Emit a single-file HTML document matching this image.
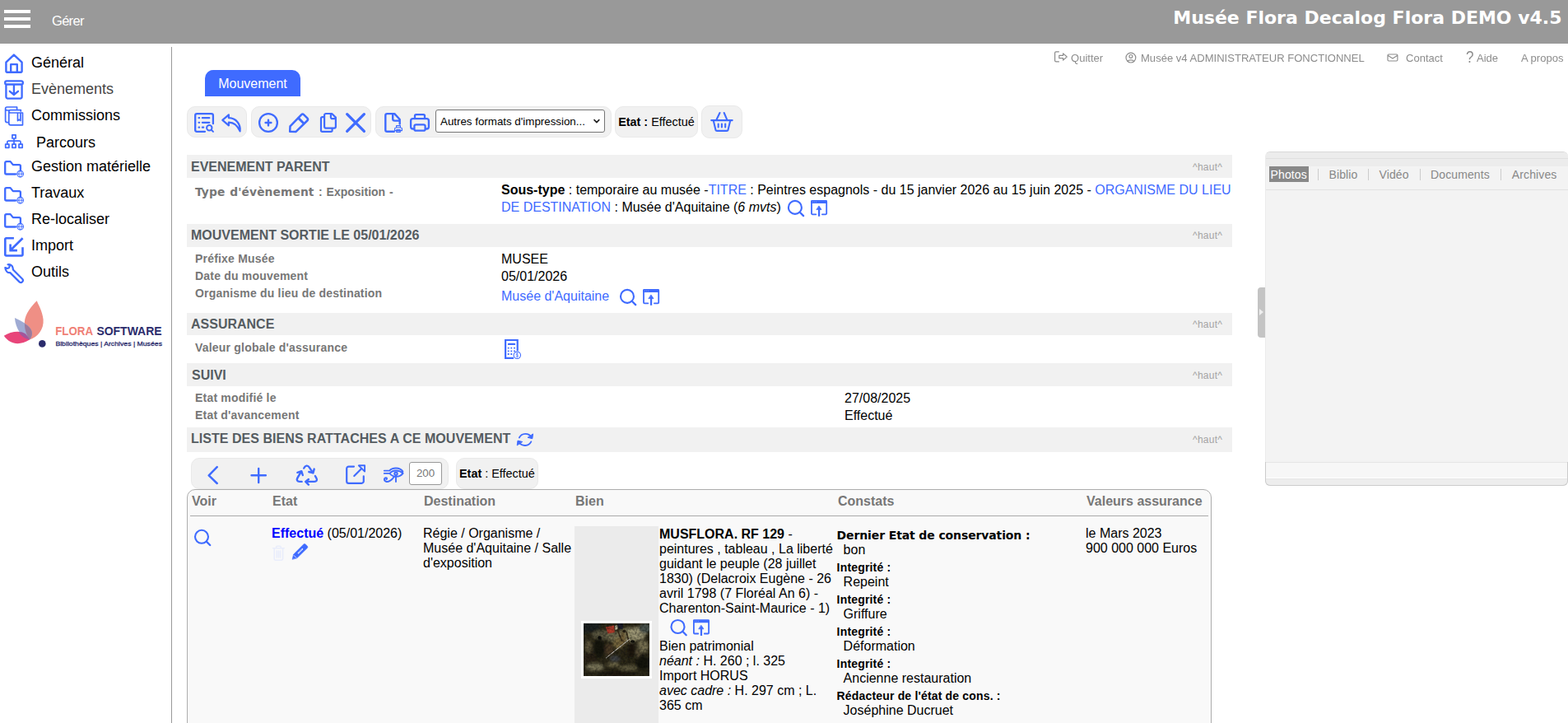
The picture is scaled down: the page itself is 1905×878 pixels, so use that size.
<!DOCTYPE html>
<html lang="fr">
<head>
<meta charset="utf-8">
<title>Musée Flora - Mouvement</title>
<style>
*{box-sizing:border-box;}
html,body{margin:0;padding:0;}
body{width:1905px;height:878px;overflow:hidden;background:#fff;font-family:"Liberation Sans",sans-serif;font-size:16px;color:#000;position:relative;}
.a{position:absolute;white-space:nowrap;}
#top{position:absolute;left:0;top:0;width:1905px;height:53px;background:#999;}
#burger{position:absolute;left:5px;top:12px;width:32px;height:22px;}
#burger i{position:absolute;left:0;width:32px;height:4px;background:#fff;}
#gerer{position:absolute;left:63px;top:15px;color:#fff;font-size:16.5px;line-height:20px;letter-spacing:-0.7px;}
#title{position:absolute;right:7.5px;top:7px;color:#fff;font-family:"DejaVu Sans","Liberation Sans",sans-serif;font-weight:bold;font-size:22px;line-height:30px;white-space:nowrap;}
#side{position:absolute;left:0;top:57px;width:209px;height:821px;border-right:1px solid #999;}
.mi{position:absolute;left:38px;font-size:18px;line-height:22px;white-space:nowrap;color:#000;}

.tl{position:absolute;top:61px;font-size:13.5px;line-height:20px;color:#8c8c8c;white-space:nowrap;transform:scaleX(0.967);transform-origin:0 0;}
#tab{position:absolute;left:249px;top:85px;width:116px;height:32px;background:#3f6bff;border-radius:10px 10px 0 0;color:#fff;font-size:16px;line-height:34px;text-align:center;}
.grp{position:absolute;top:129px;height:38px;background:#f1f1f1;border:1px solid #e9e9e9;border-radius:10px;}
.sh{position:absolute;left:227px;width:1270px;height:28px;background:#f1f1f1;color:#555c61;font-weight:bold;font-size:16px;line-height:28px;padding-left:5px;white-space:nowrap;}
.haut{position:absolute;left:1449px;font-size:12px;line-height:14px;color:#a4a4a4;white-space:nowrap;letter-spacing:0.25px;}
.lb{position:absolute;left:237px;font-weight:bold;font-size:14px;line-height:18px;color:#777;letter-spacing:0.2px;white-space:nowrap;}
.vl{position:absolute;left:609px;font-size:16px;line-height:20px;color:#000;white-space:nowrap;}
.bl{color:#3f6bff;}
.blk{font-family:"DejaVu Sans","Liberation Sans",sans-serif;font-weight:bold;font-size:13.8px;letter-spacing:0;}

#tbl{position:absolute;left:227px;top:594px;width:1245px;height:300px;border:1px solid #adadad;border-radius:10px;background:#f9f9f9;}
.th{position:absolute;top:599px;font-weight:bold;font-size:16px;line-height:20px;color:#777;white-space:nowrap;}
.td{position:absolute;font-size:16px;line-height:18px;color:#000;}
.cl{font-weight:bold;font-size:14px;line-height:18px;display:block;margin-left:-8px;letter-spacing:0.17px;}
.cv{display:block;height:21px;}
#pnl{position:absolute;left:1537px;top:184px;width:368px;height:406px;border-top:1px solid #d8d8d8;border-left:1px solid #ececec;border-radius:6px;background:#f3f3f3;overflow:hidden;}
.pt{position:absolute;top:203px;font-size:14px;line-height:19px;color:#888;white-space:nowrap;letter-spacing:0.12px;}
.ps{position:absolute;top:205px;width:1px;height:14px;background:#ccc;}
</style>
</head>
<body>
<div id="top">
  <div id="burger"><i style="top:0"></i><i style="top:9px"></i><i style="top:18px"></i></div>
  <div id="gerer">Gérer</div>
  <div id="title">Musée Flora Decalog Flora DEMO v4.5</div>
</div>
<div id="side"></div>
<!--MENU-->
<div class="mi" style="top:65px">Général</div>
<div class="mi" style="top:97px;color:#444">Evènements</div>
<div class="mi" style="top:129px">Commissions</div>
<div class="mi" style="top:162px;left:44px">Parcours</div>
<div class="mi" style="top:191px">Gestion matérielle</div>
<div class="mi" style="top:223px">Travaux</div>
<div class="mi" style="top:255px">Re-localiser</div>
<div class="mi" style="top:287px">Import</div>
<div class="mi" style="top:319px">Outils</div>
<!--LOGO-->
<svg class="a" style="left:0;top:360px" width="209" height="70" viewBox="0 360 209 70">
<path d="M35.9 412.6 C46 409 53.5 400 52.6 388 C51.5 378 46.5 370 44.8 365.3 C38 372 30.5 381 29.8 391.5 C29.5 400 32 407 35.9 412.6 Z" fill="#ef8f85"/>
<path d="M35.9 412.6 C24 420 12 418.5 4.8 407.8 C12 403 24 401 30 405 C33 407.5 35 410 35.9 412.6 Z" fill="#e8457a"/>
<path d="M35.9 412.6 C25.5 409 19 399 17.9 386.1 C26 390 35.5 394 38.5 402 C39.5 406 38.5 410 35.9 412.6 Z" fill="#8e9ccb" fill-opacity="0.85"/>
<path d="M35.9 412.6 C32.5 407 30 400 29.9 393.2 C34 395.5 37.5 398.5 38.6 402.6 C39.4 406 38.4 410 35.9 412.6 Z" fill="#9b7a9c"/>
<path d="M35.9 412.6 C31 411.5 26 408.5 22.5 403.3 C25.5 403 28.5 403.6 30.6 405.3 C33 407.4 35 410 35.9 412.6 Z" fill="#a3569a"/>
<circle cx="51.3" cy="417.4" r="4.3" fill="#2b2c6c"/>
<text x="67.2" y="406.6" font-family="'Liberation Sans',sans-serif" font-weight="bold" font-size="14px" fill="#ef7f76" textLength="45.8" lengthAdjust="spacingAndGlyphs">FLORA</text>
<text x="117.4" y="406.6" font-family="'Liberation Sans',sans-serif" font-weight="bold" font-size="14px" fill="#2b2c6c" textLength="79.2" lengthAdjust="spacingAndGlyphs">SOFTWARE</text>
<text x="67.4" y="420.4" font-family="'Liberation Sans',sans-serif" font-weight="normal" stroke="#2b2c6c" stroke-width="0.28" font-size="7.8px" fill="#2b2c6c" textLength="129.6" lengthAdjust="spacingAndGlyphs">Bibliothèques | Archives | Musées</text>
</svg>
<!--TOPLINKS-->
<div class="tl" style="left:1301.3px">Quitter</div>
<div class="tl" style="left:1385.9px">Musée v4 ADMINISTRATEUR FONCTIONNEL</div>
<div class="tl" style="left:1708.4px">Contact</div>
<div class="tl" style="left:1780.6px;top:59px;font-size:20px;transform:scaleX(0.85)">?</div>
<div class="tl" style="left:1794.4px">Aide</div>
<div class="tl" style="left:1848px">A propos</div>
<!--TAB-->
<div id="tab">Mouvement</div>
<!--TOOLBAR-->
<div class="grp" style="left:227px;width:73px"></div>
<div class="grp" style="left:305px;width:146px"></div>
<div class="grp" style="left:456px;width:287px"></div>
<div class="grp" style="left:747px;width:101px"></div>
<div class="grp" style="left:852px;width:50px;top:128px;height:40px"></div>
<div class="a" style="left:529px;top:133px;width:206px;height:28px;border:1px solid #767676;border-radius:3px;background:#fff;font-size:13.33px;line-height:28px;padding-left:5px;">Autres formats d'impression...</div>
<div class="a" style="left:751.2px;top:138px;font-size:14.4px;line-height:20px;"><b>Etat :</b> Effectué</div>
<!--SECTIONS-->
<div class="sh" style="top:188px;line-height:30px">EVENEMENT PARENT</div>
<div class="sh" style="top:272px">MOUVEMENT SORTIE LE 05/01/2026</div>
<div class="sh" style="top:380px;height:27px;line-height:27px">ASSURANCE</div>
<div class="sh" style="top:441px;padding-left:6px;line-height:30px">SUIVI</div>
<div class="sh" style="top:519px;height:30px;line-height:28px;letter-spacing:0.04px">LISTE DES BIENS RATTACHES A CE MOUVEMENT</div>
<div class="haut" style="top:196px">^haut^</div>
<div class="haut" style="top:279px">^haut^</div>
<div class="haut" style="top:387px">^haut^</div>
<div class="haut" style="top:449px">^haut^</div>
<div class="haut" style="top:527px">^haut^</div>
<div class="lb" style="top:224px;letter-spacing:0;word-spacing:1px"><span class="blk" style="letter-spacing:0.1px;margin-right:0.6px">Type d'évènement</span> : Exposition -</div>
<div class="vl" style="top:220px;line-height:21px;white-space:normal;width:895px"><b>Sous-type</b> : temporaire au musée -<span class="bl">TITRE</span> : Peintres espagnols - du 15 janvier 2026 au 15 juin 2025 - <span class="bl">ORGANISME DU LIEU DE DESTINATION</span> : Musée d'Aquitaine (<i>6 mvts</i>)</div>
<div class="lb" style="top:305px">Préfixe Musée</div>
<div class="lb" style="top:326px">Date du mouvement</div>
<div class="lb" style="top:347px">Organisme du lieu de destination</div>
<div class="vl" style="top:305px">MUSEE</div>
<div class="vl" style="top:326px">05/01/2026</div>
<div class="vl bl" style="top:350px">Musée d'Aquitaine</div>
<div class="lb" style="top:413px">Valeur globale d'assurance</div>
<div class="lb" style="top:474px">Etat modifié le</div>
<div class="lb" style="top:495px">Etat d'avancement</div>
<div class="vl" style="top:474px;left:1026px">27/08/2025</div>
<div class="vl" style="top:495px;left:1026px">Effectué</div>
<!--LIST-->
<div class="grp" style="left:232px;top:556px;width:313px;height:38px"></div>
<div class="grp" style="left:554px;top:556px;width:100px;height:38px"></div>
<div class="a" style="left:497px;top:561px;width:40px;height:28px;border:1px solid #999;border-radius:3px;background:#fff;font-size:13.33px;line-height:26px;color:#777;text-align:center;">200</div>
<div class="a" style="left:558px;top:565px;font-size:14.4px;line-height:20px;"><b>Etat</b> : Effectué</div>
<div id="tbl"></div>
<div class="a" style="left:231px;top:626px;width:1237px;height:1px;background:#aaa"></div>
<div class="th" style="left:233px">Voir</div>
<div class="th" style="left:331px">Etat</div>
<div class="th" style="left:515px">Destination</div>
<div class="th" style="left:699px">Bien</div>
<div class="th" style="left:1018px">Constats</div>
<div class="th" style="left:1320px">Valeurs assurance</div>
<div class="td" style="left:330px;top:639px;white-space:nowrap"><b style="color:#00f">Effectué</b> (05/01/2026)</div>
<div class="td" style="left:514px;top:639px;width:184px">Régie / Organisme / Musée d'Aquitaine / Salle d'exposition</div>
<div class="a" style="left:698px;top:639px;width:102px;height:240px;background:#ebebeb"></div>
<div class="a" id="thumb" style="left:706px;top:754px;width:86px;height:70px;background:#fff;"></div>
<svg class="a" style="left:709px;top:757px" width="80" height="64" viewBox="0 0 80 64">
<defs><filter id="bl" x="-20%" y="-20%" width="140%" height="140%"><feGaussianBlur stdDeviation="1.5"/></filter><filter id="bs" x="-20%" y="-20%" width="140%" height="140%"><feGaussianBlur stdDeviation="0.6"/></filter><filter id="nz" x="0" y="0" width="100%" height="100%"><feTurbulence type="fractalNoise" baseFrequency="0.35" numOctaves="2" seed="7"/><feColorMatrix type="matrix" values="0 0 0 0 0  0 0 0 0 0  0 0 0 0 0  1.6 0 0 0 -0.55"/></filter><clipPath id="cp"><rect width="80" height="64"/></clipPath></defs>
<rect width="80" height="64" fill="#2d2919"/>
<g clip-path="url(#cp)">
<g filter="url(#bl)">
<rect x="-4" y="-4" width="24" height="15" fill="#1c2220"/>
<ellipse cx="22" cy="14" rx="12" ry="6" fill="#5a563f"/>
<ellipse cx="36" cy="16" rx="8" ry="7" fill="#6f6a4d"/>
<ellipse cx="56" cy="14" rx="14" ry="9" fill="#8f8a67"/>
<ellipse cx="66" cy="12" rx="10" ry="8" fill="#9c9675"/>
<ellipse cx="75" cy="6" rx="8" ry="6" fill="#4a524d"/>
<ellipse cx="72" cy="28" rx="7" ry="8" fill="#746e50"/>
<ellipse cx="42" cy="24" rx="6" ry="7" fill="#7a6b3f"/>
<ellipse cx="19" cy="30" rx="7" ry="12" fill="#15140e"/>
<ellipse cx="6" cy="28" rx="4" ry="8" fill="#5e563d"/>
<ellipse cx="31" cy="32" rx="5" ry="7" fill="#4b3a27"/>
<ellipse cx="58" cy="33" rx="5" ry="10" fill="#1b1911"/>
<ellipse cx="48" cy="18" rx="3.5" ry="10" fill="#6e5c36"/>
<ellipse cx="66" cy="36" rx="3" ry="6" fill="#544c34"/>
<ellipse cx="14" cy="53" rx="11" ry="4.5" fill="#7c775a"/>
<ellipse cx="36" cy="50" rx="8" ry="3" fill="#6a6445"/>
<ellipse cx="54" cy="54" rx="12" ry="3.5" fill="#5d583c"/>
<ellipse cx="72" cy="48" rx="9" ry="9" fill="#13130f"/>
<ellipse cx="40" cy="61" rx="24" ry="3" fill="#1b190f"/>
<ellipse cx="8" cy="42" rx="8" ry="5" fill="#2a2416"/>
<ellipse cx="38" cy="43" rx="6" ry="4" fill="#3f4344"/>
<ellipse cx="48" cy="40" rx="5" ry="6" fill="#2a2517"/>
</g>
<g filter="url(#bs)">
<path d="M27 4.5 L37 2.5 L37.8 11 L29.5 12.5 Z" fill="#ae3a2b"/>
<path d="M41 0 H48 L47.5 7.5 L42.5 6 Z" fill="#1a1e2a"/>
<path d="M38 3 L41 2 L41.5 7 L38.5 8 Z" fill="#b9b39a"/>
<ellipse cx="19.5" cy="17.5" rx="2.4" ry="2.2" fill="#0e0e0b"/>
<ellipse cx="59.5" cy="22" rx="2.8" ry="1.8" fill="#17150e"/>
<ellipse cx="49.5" cy="9.5" rx="2" ry="2" fill="#2a2114"/>
<path d="M41 8 L47 22 M52 10 L56 26" stroke="#3a2f1b" stroke-width="1.6" fill="none"/>
<path d="M27 42.2 L56 19" stroke="#e2e2e0" stroke-width="0.9" fill="none"/>
</g>
<rect width="80" height="64" fill="#0c0a05" filter="url(#nz)" opacity="0.55"/>
</g>
</svg>
<div class="td" style="left:801px;top:640px;width:216px"><b>MUSFLORA. RF 129</b> - peintures , tableau , La liberté guidant le peuple (28 juillet 1830) (Delacroix Eugène - 26 avril 1798 (7 Floréal An 6) - Charenton-Saint-Maurice - 1)<span style="display:block;height:28px"></span>Bien patrimonial<br><i>néant :</i> H. 260 ; l. 325<br>Import HORUS<br><i>avec cadre :</i> H. 297 cm ; L. 365 cm</div>
<div class="td" style="left:1024.6px;top:641px;width:290px;white-space:nowrap"><span class="cl blk" style="letter-spacing:-0.12px">Dernier Etat de conservation :</span><span class="cv">bon</span><span class="cl">Integrité :</span><span class="cv">Repeint</span><span class="cl">Integrité :</span><span class="cv">Griffure</span><span class="cl">Integrité :</span><span class="cv">Déformation</span><span class="cl">Integrité :</span><span class="cv">Ancienne restauration</span><span class="cl">Rédacteur de l'état de cons. :</span><span class="cv">Joséphine Ducruet</span></div>
<div class="td" style="left:1319px;top:639px;white-space:nowrap">le Mars 2023<br>900 000 000 Euros</div>

<!--PANEL-->
<div id="pnl">
<div class="a" style="left:0;top:0;width:380px;height:17px;background:#ececec"></div>
<div class="a" style="left:0;top:7px;width:380px;height:1px;background:#e0e0e0"></div>
<div class="a" style="left:0;top:45px;width:380px;height:1px;background:#e2e2e2"></div>
<div class="a" style="left:0;top:376px;width:380px;height:1px;background:#e6e6e6"></div>
<div class="a" style="left:0;top:377px;width:380px;height:18px;background:#f7f7f7"></div>
<div class="a" style="left:0;top:395px;width:380px;height:1px;background:#fff"></div>
<div class="a" style="left:0;top:396px;width:380px;height:1px;background:#e6e6e6"></div>
<div class="a" style="left:0;top:397px;width:380px;height:8px;background:#ededed"></div>
</div>
<div class="a" style="left:1537px;top:561px;width:368px;height:29px;border:1px solid #ccc;border-top:0;border-radius:0 0 6px 6px;"></div>
<div class="a" style="left:1542px;top:202px;width:48px;height:19px;background:#888"></div>
<div class="pt" style="left:1543.6px;color:#fff">Photos</div>
<div class="pt" style="left:1614.5px">Biblio</div>
<div class="pt" style="left:1675.5px">Vidéo</div>
<div class="pt" style="left:1738px">Documents</div>
<div class="pt" style="left:1836.8px">Archives</div>
<div class="ps" style="left:1601px"></div>
<div class="ps" style="left:1662px"></div>
<div class="ps" style="left:1725px"></div>
<div class="ps" style="left:1823px"></div>
<div class="a" style="left:1528px;top:349px;width:9px;height:61px;background:#c4c4c4;border-radius:4px 0 0 4px"></div>
<div class="a" style="left:1530px;top:375px;width:0;height:0;border-left:5.5px solid #eee;border-top:4px solid transparent;border-bottom:4px solid transparent"></div>
<!--SVG-->
<svg id="ov" width="1905" height="878" viewBox="0 0 1905 878" style="position:absolute;left:0;top:0;pointer-events:none" fill="none" stroke="#3f6bff" stroke-linecap="round" stroke-linejoin="round">
<path d="M7.4 75.6 L16.9 66.6 L26.6 75.6 V86.6 a1.2 1.2 0 0 1 -1.2 1.2 H8.6 a1.2 1.2 0 0 1 -1.2 -1.2 Z M13.2 87.6 V78.1 H20.8 V87.6" stroke-width="2.4" />
<path d="M8 98.3 H26 a1.8 1.8 0 0 1 1.8 1.8 V100.7 a1.8 1.8 0 0 1 -1.8 1.8 H8 a1.8 1.8 0 0 1 -1.8 -1.8 V100.1 a1.8 1.8 0 0 1 1.8 -1.8 Z M7.4 102.5 V117.6 a2 2 0 0 0 2 2 H24.6 a2 2 0 0 0 2 -2 V102.5 M16.9 103.5 V114.6 M11.8 110.8 L16.9 115 L22 110.8" stroke-width="2.3" />
<path d="M20.6 132.3 V130 H8.6 a2 2 0 0 0 -2 2 V146.6 a2 2 0 0 0 2 2 H10.4 M6.6 132 a2 2 0 0 0 2 2 H10.8 M25.3 135 V133.6 H12.8 a2 2 0 0 0 -2 2 V149.8 a2 2 0 0 0 2 2 H27.5 V137 H12.8 a2 2 0 0 1 -2 -1.6 M21.5 137.3 V146.6 L23.2 145.3 L24.9 146.6 V137.3" stroke-width="1.7" />
<path d="M14.9 163.8 h4.2 v4.2 h-4.2 Z M6.7 175.1 h4.2 v4.2 h-4.2 Z M14.9 175.1 h4.2 v4.2 h-4.2 Z M23.0 175.1 h4.2 v4.2 h-4.2 Z M17 168 V175 M8.8 175 V172.8 a1.6 1.6 0 0 1 1.6 -1.6 H23.5 a1.6 1.6 0 0 1 1.6 1.6 V175" stroke-width="1.7" />
<path d="M24.9 207 V201.7 a1.6 1.6 0 0 0 -1.6 -1.6 H15.8 L12.6 196.1 H7.8 a1.6 1.6 0 0 0 -1.6 1.6 V209.9 a1.6 1.6 0 0 0 1.6 1.6 H19" stroke-width="2.3" /><circle cx="24.6" cy="211.2" r="3.8" stroke-width="1.1"/><path d="M20.8 211.2 H28.4 M24.6 207.4 c-2.4 2.4 -2.4 5.2 0 7.6 M24.6 207.4 c2.4 2.4 2.4 5.2 0 7.6" stroke-width="0.9" />
<path d="M24.9 239 V233.7 a1.6 1.6 0 0 0 -1.6 -1.6 H15.8 L12.6 228.1 H7.8 a1.6 1.6 0 0 0 -1.6 1.6 V241.9 a1.6 1.6 0 0 0 1.6 1.6 H19" stroke-width="2.3" /><circle cx="24.6" cy="243.2" r="3.8" stroke-width="1.1"/><path d="M20.8 243.2 H28.4 M24.6 239.4 c-2.4 2.4 -2.4 5.2 0 7.6 M24.6 239.4 c2.4 2.4 2.4 5.2 0 7.6" stroke-width="0.9" />
<path d="M24.9 271 V265.7 a1.6 1.6 0 0 0 -1.6 -1.6 H15.8 L12.6 260.1 H7.8 a1.6 1.6 0 0 0 -1.6 1.6 V273.9 a1.6 1.6 0 0 0 1.6 1.6 H19" stroke-width="2.3" /><circle cx="24.6" cy="275.2" r="3.8" stroke-width="1.1"/><path d="M20.8 275.2 H28.4 M24.6 271.4 c-2.4 2.4 -2.4 5.2 0 7.6 M24.6 271.4 c2.4 2.4 2.4 5.2 0 7.6" stroke-width="0.9" />
<path d="M16.9 289.3 H7.5 a1.2 1.2 0 0 0 -1.2 1.2 V309.3 a1.2 1.2 0 0 0 1.2 1.2 H26.3 a1.2 1.2 0 0 0 1.2 -1.2 V300.3" stroke-width="2.6" stroke-linecap="butt"/>
<path d="M27.6 289.2 L12.6 304 M12.6 296.4 V304.1 H20.9" stroke-width="2.6" stroke-linecap="butt" stroke-linejoin="miter"/>
<path d="M9.5 321.3 C12.2 320.6 15.2 322.2 15.6 325.4 L15.9 327.5 L27.2 338.8 a2.55 2.55 0 0 1 -3.6 3.6 L12.3 331.1 C9.6 331.6 6.6 329.6 6.3 325 C8 326.2 10.4 326 11 325.2 L11.9 322.6 C11.2 321.9 10.4 321.5 9.5 321.3 Z" stroke-width="2.2" />
<path d="M258.9 150.2 V140.1 a2 2 0 0 0 -2 -2 H239.2 a2 2 0 0 0 -2 2 V157.8 a2 2 0 0 0 2 2 H249" stroke-width="2.3" />
<path d="M241.6 143.2 h0.5 M241.6 148.8 h0.5 M241.6 154.7 h0.5 M245.9 143.2 H254.3 M245.9 148.8 H254.3 M245.9 154.7 H247.2" stroke-width="2.3" />
<circle cx="254.3" cy="155.2" r="3.2" stroke-width="2"/><path d="M256.8 157.7 L259 159.9" stroke-width="2" />
<path d="M277.9 139.4 L270.3 145.9 L277.9 152.4 V148.6 C283.5 148.5 288.6 152.2 291.6 159.4 C292.6 150.8 287 143.5 277.9 143.2 Z" stroke-width="2.2" />
<circle cx="326" cy="149" r="10.9" stroke-width="2.3"/><path d="M322.6 149 H329.4 M326 145.6 V152.4" stroke-width="2.4" />
<path d="M352.2 159.7 L352.5 153.4 L366.1 139.3 a2.2 2.2 0 0 1 3.1 0 L373.3 143.4 a2.2 2.2 0 0 1 0 3.1 L359.6 159.9 Z " stroke-width="2.5" /><path d="M362.8 143.6 L368.9 149.7" stroke-width="2.9" />
<path d="M394 142.1 H391.6 a1.6 1.6 0 0 0 -1.6 1.6 V158.3 a1.6 1.6 0 0 0 1.6 1.6 H402 a1.6 1.6 0 0 0 1.6 -1.6 V156.8 M396 138 H403.2 L407.9 142.6 V153.8 a1.9 1.9 0 0 1 -1.9 1.9 H396 a1.9 1.9 0 0 1 -1.9 -1.9 V139.9 a1.9 1.9 0 0 1 1.9 -1.9 Z M401.9 138.4 V142.4 a1.8 1.8 0 0 0 1.8 1.8 H407.6" stroke-width="2.2" />
<path d="M421.7 138.7 L442.4 159.4 M442.4 138.7 L421.7 159.4" stroke-width="3.3" />
<path d="M478.8 159.8 H470.4 a2.1 2.1 0 0 1 -2.1 -2.1 V140.2 a2.1 2.1 0 0 1 2.1 -2.1 H479.3 L485.7 145 V150.6 M477.2 138.6 V144.2 a2.4 2.4 0 0 0 2.4 2.4 H485.4" stroke-width="2.4" />
<path d="M481.6 155 V152.7 H486.4 V155 M481 155 H487 a1.4 1.4 0 0 1 1.4 1.4 V158.6 H479.6 V156.4 a1.4 1.4 0 0 1 1.4 -1.4 Z M481.8 160.4 V157.6 H486.2 V160.4 Z" stroke-width="1.2" />
<path d="M504 143.6 V140.8 a1.6 1.6 0 0 1 1.6 -1.6 H514.4 a1.6 1.6 0 0 1 1.6 1.6 V143.6 M503 156.5 H501.6 a2.5 2.5 0 0 1 -2.5 -2.5 V146.7 a2.5 2.5 0 0 1 2.5 -2.5 H518.4 a2.5 2.5 0 0 1 2.5 2.5 V154 a2.5 2.5 0 0 1 -2.5 2.5 H517 M505.4 151.3 H514.6 a2 2 0 0 1 2 2 V156.7 a2 2 0 0 1 -2 2 H505.4 a2 2 0 0 1 -2 -2 V153.3 a2 2 0 0 1 2 -2 Z" stroke-width="2.3" />
<path d="M722 145.6 L724.9 148.6 L727.8 145.6" stroke="#222" stroke-width="1.6" fill="none"/>
<path d="M864.2 146.1 H889.7 M870.3 145.8 L874.5 137 M883.5 145.8 L879.7 137 M866.9 147 L869.3 157 a2 2 0 0 0 2 1.9 H882.7 a2 2 0 0 0 2 -1.9 L887.1 147 M872.7 150.6 V154.4 M876.9 150.6 V154.4 M881.2 150.6 V154.4" stroke-width="2.1" />
<circle cx="965.9" cy="251.9" r="8" stroke-width="2.1"/><path d="M971.6999999999999 257.7 L976.1 262.1" stroke-width="2.3" />
<path d="M986.3000000000001 243 H1003.8000000000001 a1.2 1.2 0 0 1 1.2 1.2 V247 H985.1 V244.2 a1.2 1.2 0 0 1 1.2 -1.2 Z" fill="#3f6bff" stroke="none"/><path d="M991.3000000000001 260.3 H987.1 a1.1 1.1 0 0 1 -1.1 -1.1 V245 M998.9 260.3 H1003.1 a1.1 1.1 0 0 0 1.1 -1.1 V245" stroke-width="1.8" /><path d="M995.1 262.8 V254" stroke-width="2.2" stroke-linecap="butt"/><path d="M995.1 250.3 L998.0 254.6 H992.2 Z" fill="#3f6bff" stroke="#3f6bff" stroke-width="0.8"/><path d="M987.4 245.2 h0.6 M989.4 245.2 h0.6 M991.4 245.2 h0.6" stroke="#a9bcff" stroke-width="1" stroke-linecap="butt"/>
<circle cx="762" cy="359.9" r="8" stroke-width="2.1"/><path d="M767.8 365.7 L772.2 370.09999999999997" stroke-width="2.3" />
<path d="M782.3000000000001 351 H799.8000000000001 a1.2 1.2 0 0 1 1.2 1.2 V355 H781.1 V352.2 a1.2 1.2 0 0 1 1.2 -1.2 Z" fill="#3f6bff" stroke="none"/><path d="M787.3000000000001 368.3 H783.1 a1.1 1.1 0 0 1 -1.1 -1.1 V353 M794.9 368.3 H799.1 a1.1 1.1 0 0 0 1.1 -1.1 V353" stroke-width="1.8" /><path d="M791.1 370.8 V362" stroke-width="2.2" stroke-linecap="butt"/><path d="M791.1 358.3 L794.0 362.6 H788.2 Z" fill="#3f6bff" stroke="#3f6bff" stroke-width="0.8"/><path d="M783.4 353.2 h0.6 M785.4 353.2 h0.6 M787.4 353.2 h0.6" stroke="#a9bcff" stroke-width="1" stroke-linecap="butt"/>
<circle cx="823.5" cy="761" r="8" stroke-width="2.1"/><path d="M829.3 766.8 L833.7 771.2" stroke-width="2.3" />
<path d="M843.2 752.2 H860.7 a1.2 1.2 0 0 1 1.2 1.2 V756.2 H842 V753.4000000000001 a1.2 1.2 0 0 1 1.2 -1.2 Z" fill="#3f6bff" stroke="none"/><path d="M848.2 769.5 H844 a1.1 1.1 0 0 1 -1.1 -1.1 V754.2 M855.8 769.5 H860 a1.1 1.1 0 0 0 1.1 -1.1 V754.2" stroke-width="1.8" /><path d="M852 772.0 V763.2" stroke-width="2.2" stroke-linecap="butt"/><path d="M852 759.5 L854.9 763.8000000000001 H849.1 Z" fill="#3f6bff" stroke="#3f6bff" stroke-width="0.8"/><path d="M844.3 754.4000000000001 h0.6 M846.3 754.4000000000001 h0.6 M848.3 754.4000000000001 h0.6" stroke="#a9bcff" stroke-width="1" stroke-linecap="butt"/>
<circle cx="245" cy="651.8" r="8" stroke-width="2.1"/><path d="M250.8 657.5999999999999 L255.2 662.0" stroke-width="2.3" />
<path d="M628.7 426 V413 H614.1 V434.9 H624" stroke-width="2.2" stroke-linecap="butt" stroke-linejoin="miter"/>
<path d="M618 417.9 H625" stroke-width="2.4" />
<path d="M616.8 421.8 h1.8 v1.8 h-1.8 Z M620.4 421.8 h1.8 v1.8 h-1.8 Z M624.1 421.8 h1.8 v1.8 h-1.8 Z M616.8 425.4 h1.8 v1.8 h-1.8 Z M620.4 425.4 h1.8 v1.8 h-1.8 Z M624.1 425.4 h1.8 v1.8 h-1.8 Z M616.8 429.1 h1.8 v1.8 h-1.8 Z M620.4 429.1 h1.8 v1.8 h-1.8 Z" fill="#3f6bff" stroke="none"/>
<circle cx="628.3" cy="431.3" r="4.2" fill="#fff" stroke-width="1.1"/><path d="M629.4 429.8 c-1 -1 -2.4 -0.6 -2.4 0.4 c0 1.4 2.6 0.8 2.6 2.2 c0 1 -1.6 1.4 -2.6 0.4 M628.3 428.6 V434" stroke-width="0.7" />
<path d="M630.9 531.4 A8.5 8.5 0 0 1 645.6 530.8 M645.3 536.4 A8.5 8.5 0 0 1 630.6 537" stroke-width="1.9" />
<path d="M647.5 527.3 L646.8 532.7 L641.4 531.4 Z M628.3 540.5 L629 535.1 L634.4 536.4 Z" fill="#3f6bff" stroke="#3f6bff" stroke-width="1"/>
<path d="M263.7 567.2 L253.7 577.3 L263.7 587" stroke-width="2.5" />
<path d="M305.5 577.3 H322.9 M314.2 568.9 V586" stroke-width="2.4" />
<path d="M369.2 568.6 C370.6 565 374 564.6 375.8 567.6 L380.2 574.2 M375.3 573 L380.4 574.4 L381.7 569.6 M382.9 578 L384.4 580.6 C386 583 384.4 584.9 382 584.9 H371.4 M374.9 582 L371.2 584.9 L374.9 588.6 M366.6 584.9 H364 C361 584.9 360 582.6 361.6 580 L366 572.6 M361.4 573.8 L366.3 572.2 L367.8 577" stroke-width="2.4" />
<path d="M430 566.6 H423.6 a2.4 2.4 0 0 0 -2.4 2.4 V584.4 a2.4 2.4 0 0 0 2.4 2.4 H439.4 a2.4 2.4 0 0 0 2.4 -2.4 V578.4" stroke-width="2.2" />
<path d="M430.3 578 L439.5 568.8" stroke-width="2.2" /><path d="M435.8 565.3 H443.1 V572.6 Z" stroke-width="1.9" />
<path d="M466.8 571.6 H473.2 C476 568 485.5 566.5 489.4 572.6 M466.8 574.9 H473.4 M473.4 575 C477 570.4 485 570.4 489.6 574.8 C485 580.2 477.5 580 473.4 575 Z M481 579.4 V585 M478.4 579.6 C476 583.4 471.6 585.6 469 584.8 C466 583.8 466.4 580 469 580.2 C470.4 580.4 470.4 582 469.4 582.2" stroke-width="1.9" />
<circle cx="481" cy="575.2" r="1.7" stroke-width="2"/>
<g stroke="#e9edfb" stroke-width="1.6" fill="none"><path d="M331.6 665.8 H345.2 M335.6 665.4 V664.2 a1 1 0 0 1 1 -1 H340.2 a1 1 0 0 1 1 1 V665.4 M333.2 666.2 V678.6 a1.6 1.6 0 0 0 1.6 1.6 H342 a1.6 1.6 0 0 0 1.6 -1.6 V666.2 M336.3 669 V677 M338.4 669 V677 M340.5 669 V677"/></g>
<path d="M355.2 679 L356.6 673.2 L368.8 661 a1.7 1.7 0 0 1 2.4 0 L373.3 663.1 a1.7 1.7 0 0 1 0 2.4 L361 677.6 Z" fill="#3f6bff" stroke="#3f6bff" stroke-width="0.6"/>
<path d="M362.4 671.8 L367.4 666.8" stroke="#fff" stroke-width="1.5"/><path d="M363 671.2 L366.8 667.4" stroke="#3f6bff" stroke-width="0.5"/><path d="M357.2 674.6 L359.8 677.2" stroke="#fff" stroke-width="0.8"/>
<g stroke="#8c8c8c" stroke-width="1.2" fill="none"><path d="M1286.4 62.8 H1283 a1.4 1.4 0 0 0 -1.4 1.4 V73.5 a1.4 1.4 0 0 0 1.4 1.4 H1286.4"/><path d="M1286.8 67.3 H1291.6 V64.9 L1296.2 69 L1291.6 73.1 V70.7 H1286.8 Z"/><circle cx="1373.9" cy="70.1" r="5.9"/><circle cx="1373.9" cy="68.4" r="1.9"/><path d="M1370.2 74.5 C1371 72.4 1376.8 72.4 1377.6 74.5"/><path d="M1687.2 66 H1696.7 a1.2 1.2 0 0 1 1.2 1.2 V72.8 a1.2 1.2 0 0 1 -1.2 1.2 H1687.2 a1.2 1.2 0 0 1 -1.2 -1.2 V67.2 a1.2 1.2 0 0 1 1.2 -1.2 Z M1686.4 67.4 L1691.95 71 L1697.5 67.4" stroke-width="1.15"/></g>
</svg>
<!--/SVG-->
</body>
</html>
